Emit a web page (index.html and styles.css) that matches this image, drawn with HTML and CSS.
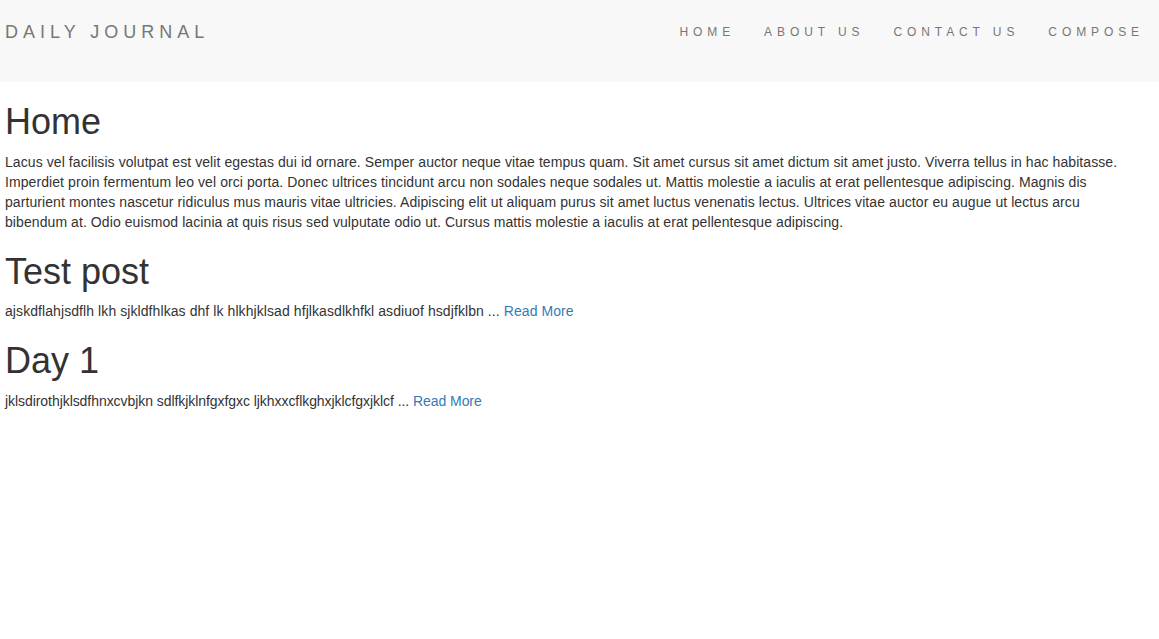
FILE: index.html
```html
<!DOCTYPE html>
<html lang="en">
<head>
<meta charset="utf-8">
<title>Daily Journal</title>
<link rel="stylesheet" href="styles.css">
</head>
<body>
<header class="navbar">
  <a class="brand" href="#">DAILY JOURNAL</a>
  <nav class="nav">
    <a class="nav-link" href="#">HOME</a>
    <a class="nav-link" href="#">ABOUT US</a>
    <a class="nav-link" href="#">CONTACT US</a>
    <a class="nav-link" href="#">COMPOSE</a>
  </nav>
</header>
<main class="content">
  <h1 class="title">Home</h1>
  <p class="text">Lacus vel facilisis volutpat est velit egestas dui id ornare. Semper auctor neque vitae tempus quam. Sit amet cursus sit amet dictum sit amet justo. Viverra tellus in hac habitasse. Imperdiet proin fermentum leo vel orci porta. Donec ultrices tincidunt arcu non sodales neque sodales ut. Mattis molestie a iaculis at erat pellentesque adipiscing. Magnis dis parturient montes nascetur ridiculus mus mauris vitae ultricies. Adipiscing elit ut aliquam purus sit amet luctus venenatis lectus. Ultrices vitae auctor eu augue ut lectus arcu bibendum at. Odio euismod lacinia at quis risus sed vulputate odio ut. Cursus mattis molestie a iaculis at erat pellentesque adipiscing.</p>
  <h1 class="title">Test post</h1>
  <p class="text">ajskdflahjsdflh lkh sjkldfhlkas dhf lk hlkhjklsad hfjlkasdlkhfkl asdiuof hsdjfklbn ... <a class="more" href="#">Read More</a></p>
  <h1 class="title">Day 1</h1>
  <p class="text text-tight">jklsdirothjklsdfhnxcvbjkn sdlfkjklnfgxfgxc ljkhxxcflkghxjklcfgxjklcf ... <a class="more" href="#">Read More</a></p>
</main>
</body>
</html>
```
FILE: styles.css
```css
html, body {
  margin: 0;
  padding: 0;
  background: #fff;
}

body {
  font-family: "Liberation Sans", Arial, Helvetica, sans-serif;
  font-size: 14px;
  line-height: 20px;
  color: #333;
}

a {
  text-decoration: none;
}

.navbar {
  height: 82px;
  background: #f8f8f8;
  display: flex;
  justify-content: space-between;
  align-items: flex-start;
  padding: 0 15px 0 5px;
  box-sizing: border-box;
}

.brand {
  font-size: 18px;
  line-height: 20px;
  letter-spacing: 5px;
  color: #777;
  padding-top: 22px;
}

.nav {
  display: flex;
  gap: 29px;
  padding-top: 22px;
}

.nav-link {
  font-size: 12px;
  line-height: 20px;
  letter-spacing: 4.9px;
  color: #777;
}

.content {
  padding: 0 15px 0 5px;
}

.title {
  font-size: 36px;
  font-weight: 500;
  line-height: 1.1;
  margin: 20px 0 10px;
  color: #333;
}

.text {
  margin: 0 0 10px;
  letter-spacing: 0.08px;
}

.text-tight {
  letter-spacing: -0.06px;
}

.more {
  color: #337ab7;
}
```
